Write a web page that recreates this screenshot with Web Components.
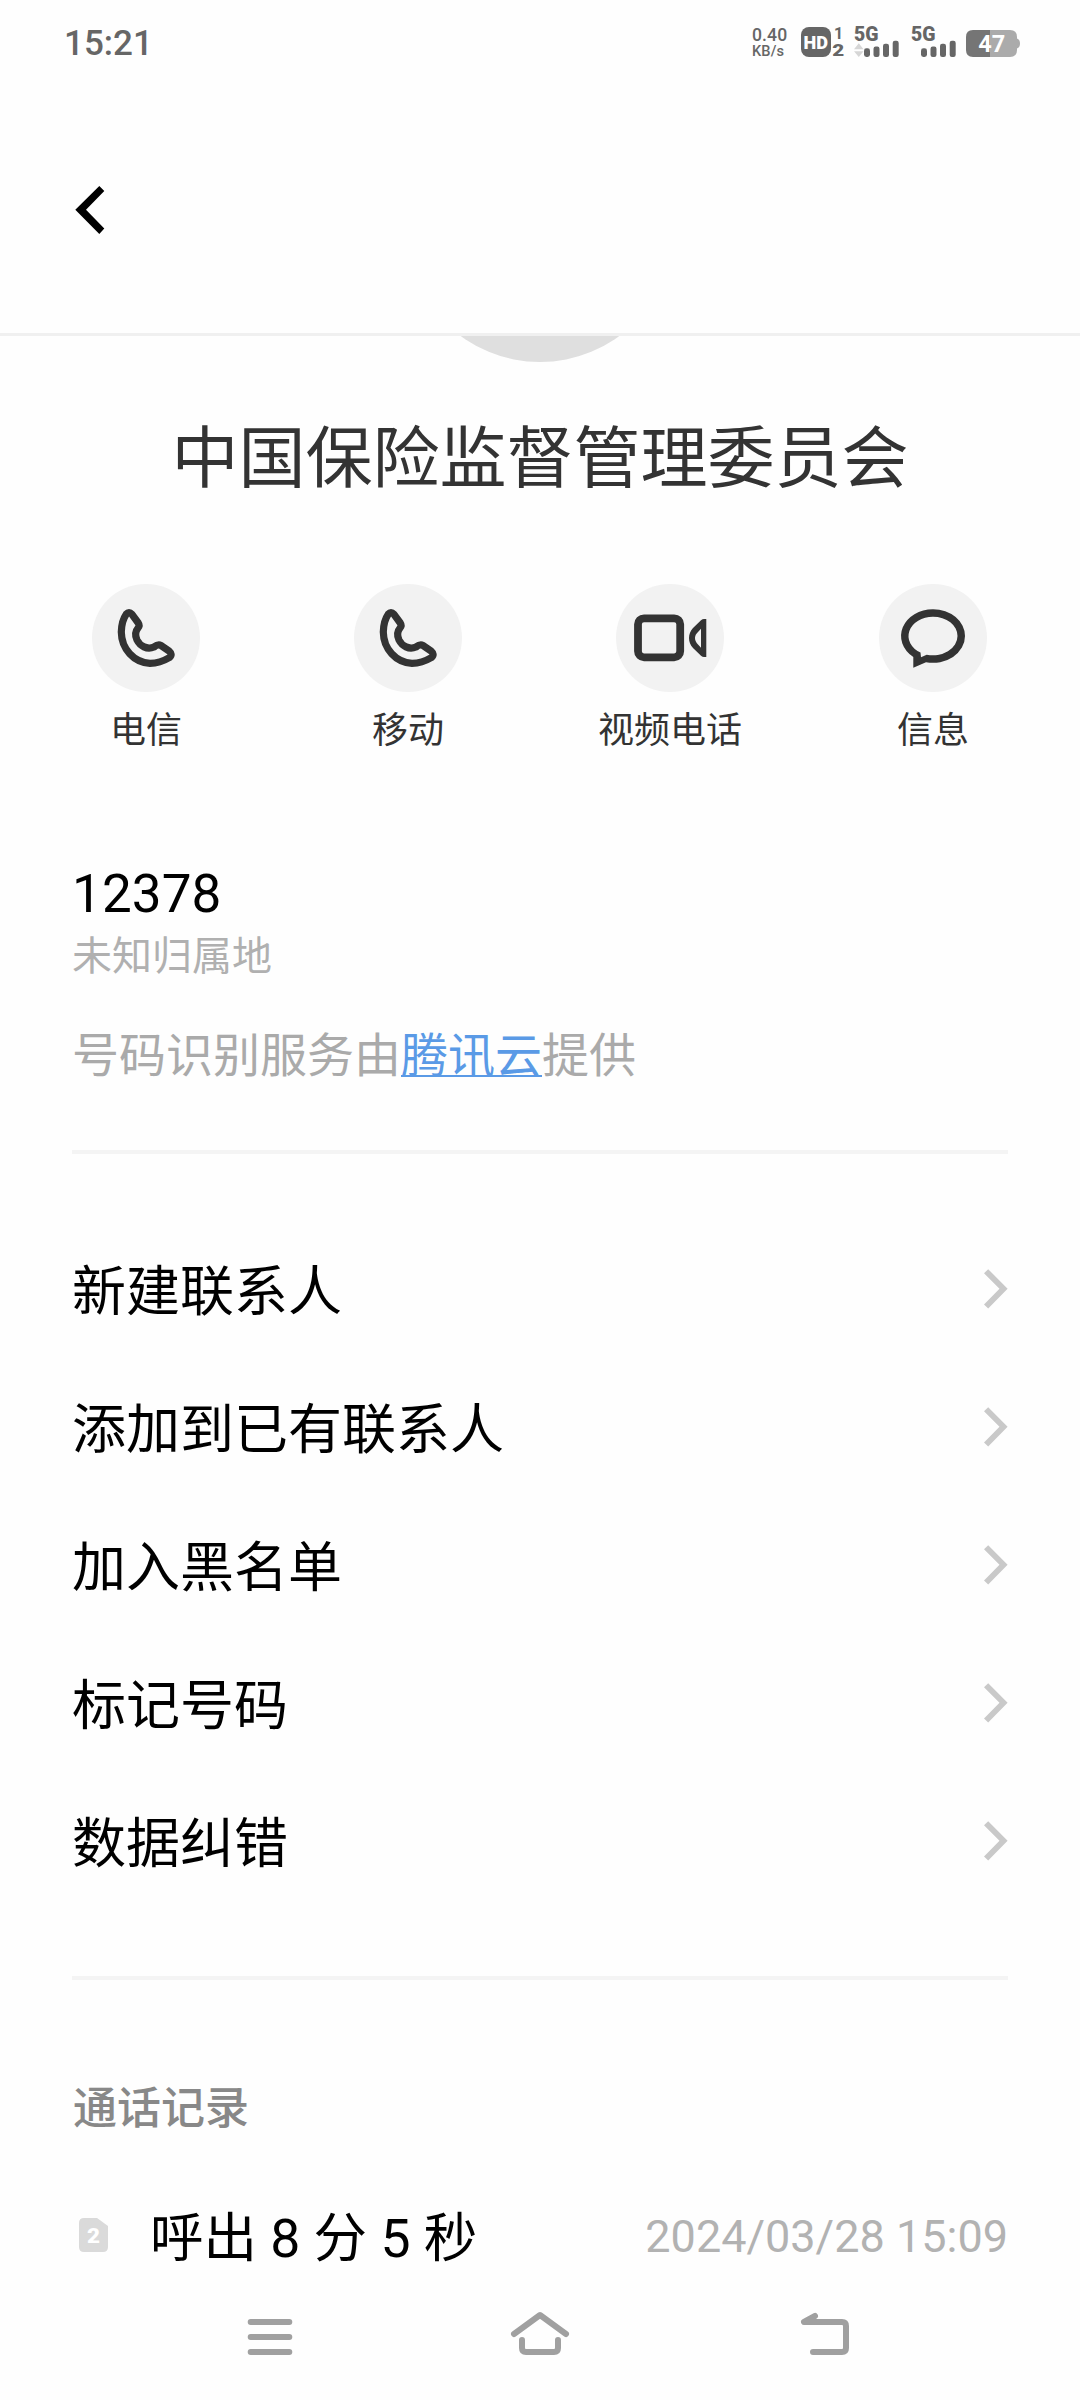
<!DOCTYPE html>
<html lang="zh-CN">
<head>
<meta charset="utf-8">
<title>联系人详情</title>
<style>
html,body{margin:0;padding:0;background:#fefefe}
body{width:1080px;height:2400px;overflow:hidden;font-family:Roboto,"Noto Sans CJK SC",sans-serif;color:#000}
</style>
</head>
<body>
<contact-page></contact-page>
<script>
function define(name, html){
  const t=document.createElement('template');
  t.innerHTML=html;
  customElements.define(name,class extends HTMLElement{
    constructor(){super();this.attachShadow({mode:'open'}).appendChild(t.content.cloneNode(true));}
  });
}

define('signal-icon',`<style>:host{display:block;width:46px;height:32px}svg{display:block;overflow:visible}
:host([data]) .d{visibility:visible}.d{visibility:hidden}</style>
<svg width="46" height="32" fill="#666"><text x="0" y="15.4" font-size="20" font-weight="900" font-family="Roboto" textLength="24.5" lengthAdjust="spacingAndGlyphs">5G</text>
<g class="d" fill="#d6d6d6"><path d="M0 23.3L4.8 17.3L9.5 23.3ZM0 25.2H9.5L4.8 31Z"/></g>
<rect x="10" y="22.3" width="6" height="8.7" rx="2.4"/><rect x="19.5" y="20.5" width="6" height="10.5" rx="2.2"/><rect x="29" y="17.7" width="6" height="13.3" rx="2.2"/><rect x="38.7" y="14.8" width="6" height="16.2" rx="2.2"/></svg>`);

define('status-bar',`<style>
:host{display:flex;height:84px;box-sizing:border-box;padding:0 59px 0 64px;justify-content:space-between;color:#666}
.time{font:500 35px/84px Roboto;padding-top:2px}
.right{display:flex;padding-top:26px;align-items:flex-start}
.speed{display:flex;flex-direction:column;width:49px;font-weight:500;padding-top:1px}
.speed b{font:500 17.6px/16px Roboto;letter-spacing:.1px}.speed i{font:500 14.6px/14px Roboto;letter-spacing:.1px;padding-top:1px}
svg{display:block;overflow:visible}.hd{margin-right:9px}.s1{margin-right:11px}.s2{margin-right:9px}
</style>
<div class="time">15:21</div>
<div class="right">
<div class="speed"><b>0.40</b><i>KB/s</i></div>
<svg class="hd" width="44" height="32" font-family="Roboto" font-weight="900"><rect x="0" y="1" width="30" height="30" rx="8" fill="#666"/>
<text x="2.4" y="22.7" font-size="17.8" fill="#fff" textLength="24.5" lengthAdjust="spacingAndGlyphs">HD</text>
<text x="33" y="12.6" font-size="16" font-weight="700" fill="#666">1</text><text x="31.2" y="30.4" font-size="16.5" fill="#666" textLength="12" lengthAdjust="spacingAndGlyphs">2</text></svg>
<signal-icon class="s1" data></signal-icon><signal-icon class="s2"></signal-icon>
<svg width="55" height="32"><path d="M7 4H24V31H7Q0 31 0 24V11Q0 4 7 4Z" fill="#757575"/><path d="M24 4H44Q51 4 51 11V12.5Q54 13.5 54 17.5T51 22.5V24Q51 31 44 31H24Z" fill="#ababab"/>
<text x="12.3" y="25.6" font-family="Roboto" font-weight="700" font-size="23.5" fill="#fff">47</text></svg>
</div>`);

define('title-bar',`<style>:host{display:flex;height:252px;box-sizing:border-box;border-bottom:3px solid #f0f0f0;align-items:flex-start;padding:102px 0 0 75px}svg{display:block}</style>
<svg width="30" height="48"><path d="M.3 23.8L24.3 0L29.3 5L11 23.8L29.3 42.6L24.3 48Z"/></svg>`);

define('contact-head',`<style>
:host{display:flex;flex-direction:column;align-items:center;height:248px}
.clip{height:26px;width:268px;overflow:hidden;display:flex;align-items:flex-end}
.avatar{flex:none;width:268px;height:268px;border-radius:50%;background:#dfdfdf}
h1{margin:49px 0 0;font-weight:400;font-size:67px;line-height:96px;color:#333;white-space:nowrap}
</style><div class="clip"><div class="avatar"></div></div><h1><slot></slot></h1>`);

define('action-button',`<style>
:host{display:flex;flex-direction:column;align-items:center;width:148px}
.c{width:108px;height:108px;border-radius:50%;background:#f2f2f2}
.l{font-size:36px;line-height:50px;color:#333;margin-top:14px;white-space:nowrap}
::slotted(svg){display:block}
</style><div class="c"><slot name="icon"></slot></div><div class="l"><slot></slot></div>`);

define('action-row',`<style>:host{display:flex;height:258px;padding:0 72px;gap:114px}action-button:last-child{margin-left:1px}</style>
<action-button><svg slot="icon" width="108" height="108"><path fill="none" stroke="#333" stroke-width="7.2" stroke-linejoin="round" d="M34.2 30.2Q37 27 39.8 30.2L46.3 39Q48 41.5 46 44Q41.8 49 45 56C48 62 55 66 62 63Q66 60 69 61.5L77 67Q81 70.5 77.5 73.5C70 78 64 79.3 58 79.3C42 78.5 29.5 65 29.3 48Q29.5 37 34.2 30.2Z"/></svg>电信</action-button>
<action-button><svg slot="icon" width="108" height="108"><path fill="none" stroke="#333" stroke-width="7.2" stroke-linejoin="round" d="M34.2 30.2Q37 27 39.8 30.2L46.3 39Q48 41.5 46 44Q41.8 49 45 56C48 62 55 66 62 63Q66 60 69 61.5L77 67Q81 70.5 77.5 73.5C70 78 64 79.3 58 79.3C42 78.5 29.5 65 29.3 48Q29.5 37 34.2 30.2Z"/></svg>移动</action-button>
<action-button><svg slot="icon" width="108" height="108"><rect x="22" y="34.3" width="42.2" height="39" rx="6" fill="none" stroke="#333" stroke-width="7.8"/><path fill="#333" fill-rule="evenodd" d="M90.3 35V73H88Q86.5 73 85 71.8L77 64C71.7 58.5 71.7 49.5 77 44L85 36.2Q86.5 35 88 35ZM85 44.7L82 48C78 51.5 78 56.5 82 60.5L85 63.7Z"/></svg>视频电话</action-button>
<action-button><svg slot="icon" width="108" height="108"><path fill="#333" fill-rule="evenodd" d="M34.3 73.1A32 26.8 0 0 1 54 25.2A32 26.8 0 0 1 86 52A32 26.8 0 0 1 47 78.2L34.3 83.7ZM41.5 68.6A24.5 19.3 0 0 1 54 32.7A24.5 19.3 0 0 1 78.5 52A24.5 19.3 0 0 1 47.7 70.7L42 73.3Z"/></svg>信息</action-button>`);

define('number-info',`<style>
:host{display:block;height:308px}
.n{font-size:53px;line-height:64px;padding-top:20px;letter-spacing:.1px}
.p{font-size:40px;line-height:56px;color:#b0b0b0;padding-top:3px}
.s{font-size:47px;line-height:66px;color:#aaa;padding-top:38px;white-space:nowrap}
a{color:#5a9ae6;text-decoration:underline;text-decoration-thickness:2px;text-underline-offset:3px;text-decoration-skip-ink:none}
</style><div class="n">12378</div><div class="p">未知归属地</div><div class="s">号码识别服务由<a>腾讯云</a>提供</div>`);

define('menu-item',`<style>:host{display:flex;height:138px;align-items:center;justify-content:space-between;font-size:54px;line-height:78px}span{padding-top:8px}svg{display:block}</style>
<span><slot></slot></span><svg width="24" height="40"><path fill="#c9c9c9" d="M0 4.2L4.2 .2L23.6 19.8L4.2 39.4L0 35.4L15.5 19.8Z"/></svg>`);

define('menu-list',`<style>:host{display:block;box-sizing:border-box;height:822px;padding-top:66px}</style><slot></slot>`);
define('rule-line',`<style>:host{display:block;height:4px;background:#f4f4f4}</style>`);

define('call-record',`<style>:host{display:flex;align-items:center;height:80px}
svg{display:block;margin:0 42px 0 7px}.t{font-size:53.5px;line-height:78px;flex:1;white-space:nowrap;padding-top:7px}.d{font-size:45px;line-height:60px;color:#b2b2b2;white-space:nowrap;padding-top:3px}</style>
<svg width="29" height="34"><path fill="#dadada" d="M5 0H18L29 8V29Q29 34 24 34H5Q0 34 0 29V5Q0 0 5 0Z"/><text x="8" y="24.5" font-family="Roboto" font-weight="900" font-size="21" fill="#fff" textLength="13" lengthAdjust="spacingAndGlyphs">2</text></svg>
<span class="t"><slot></slot></span><span class="d"><slot name="date"></slot></span>`);

define('call-log',`<style>:host{display:block;height:300px}h2{margin:0;padding:97px 0 0 1px;font-size:44px;line-height:64px;font-weight:500;color:#888}.r{padding-top:54px}</style>
<h2>通话记录</h2><div class="r"><slot></slot></div>`);

define('nav-bar',`<style>:host{display:flex;height:104px;padding-left:247px;align-items:flex-start}svg{display:block;margin-top:14px;fill:none;stroke:#a0a0a0;stroke-width:6;stroke-linecap:round;stroke-linejoin:round}.h{margin:14px 230px 0 217px}</style>
<svg width="46" height="48"><path d="M3.7 12H42.3M3.7 27H42.3M3.7 42H42.3"/></svg>
<svg class="h" width="60" height="48"><path d="M4 24L30 5L56 24M12 30V38Q12 42 16 42H44Q48 42 48 38V30"/></svg>
<svg width="50" height="48"><path d="M15 6L4 12H42Q46 12 46 16V38Q46 42 42 42H13"/></svg>`);

define('contact-page',`<style>:host{display:flex;flex-direction:column;width:1080px;height:2400px;background:#fefefe}.b{padding:0 72px;height:1454px;flex:none}</style>
<status-bar></status-bar><title-bar></title-bar>
<contact-head>中国保险监督管理委员会</contact-head>
<action-row></action-row>
<div class="b"><number-info></number-info><rule-line></rule-line>
<menu-list><menu-item>新建联系人</menu-item><menu-item>添加到已有联系人</menu-item><menu-item>加入黑名单</menu-item><menu-item>标记号码</menu-item><menu-item>数据纠错</menu-item></menu-list>
<rule-line></rule-line>
<call-log><call-record>呼出 8 分 5 秒<span slot="date">2024/03/28 15:09</span></call-record></call-log></div>
<nav-bar></nav-bar>`);
</script>
</body>
</html>
